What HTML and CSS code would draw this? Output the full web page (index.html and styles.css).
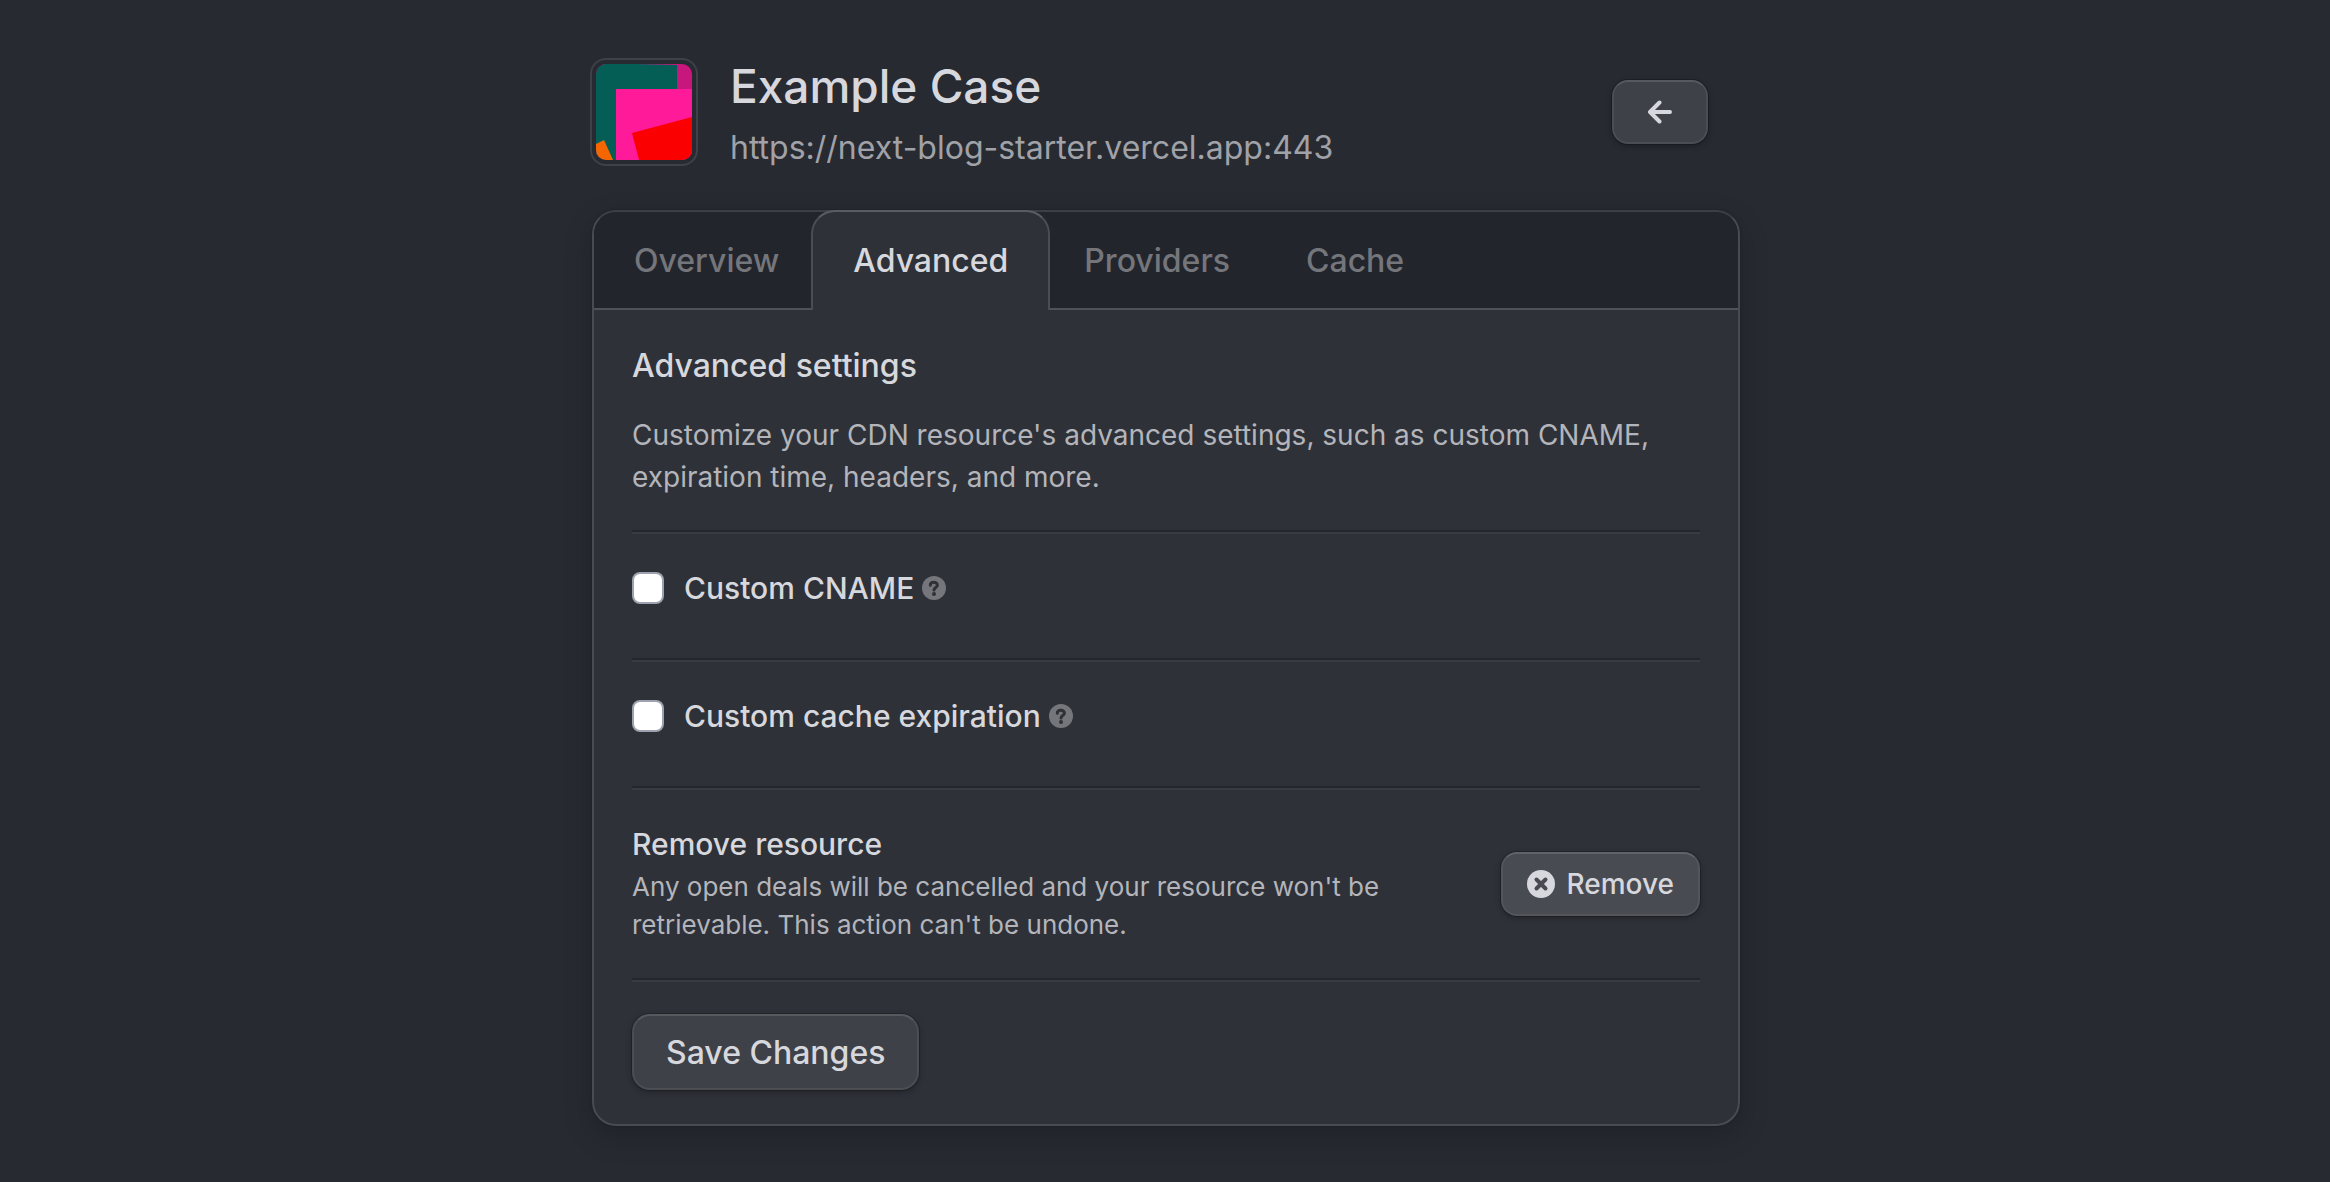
FILE: index.html
```html
<!DOCTYPE html>
<html lang="en">
<head>
<meta charset="utf-8">
<meta name="viewport" content="width=device-width, initial-scale=1">
<title>Example Case</title>
<link rel="stylesheet" href="styles.css">
</head>
<body>
<main class="page">
  <header class="resource">
    <svg class="avatar" viewBox="0 0 96 96" aria-hidden="true">
      <rect width="96" height="96" fill="#c7177c"/>
      <path d="M0 0H40L81 1V25L20 96H0Z" fill="#045e56"/>
      <path d="M20 25H96V96H20Z" fill="#ff1a9a"/>
      <path d="M36 69L96 53V96H43Z" fill="#fb0000"/>
      <path d="M0 80L8 76L17 96H0Z" fill="#f56600"/>
    </svg>
    <div class="resource-text">
      <h1 class="title">Example Case</h1>
      <p class="origin">https://next-blog-starter.vercel.app:443</p>
    </div>
    <button class="button button-back" type="button" aria-label="Back">
      <svg class="icon-arrow" viewBox="0 0 24 24" aria-hidden="true"><path d="M22 12H2M11.500 2.500L2 12L11.500 21.500"/></svg>
    </button>
  </header>

  <section class="card">
    <nav class="tabs">
      <a class="tab" href="#overview">Overview</a>
      <a class="tab tab-active" href="#advanced" aria-current="page">Advanced</a>
      <a class="tab" href="#providers">Providers</a>
      <a class="tab" href="#cache">Cache</a>
    </nav>
    <form class="panel">
      <h2 class="heading">Advanced settings</h2>
      <p class="description">Customize your CDN resource's advanced settings, such as custom CNAME, expiration time, headers, and more.</p>
      <hr class="divider">
      <div class="option">
        <input class="checkbox" type="checkbox" id="cname">
        <label class="label" for="cname">Custom CNAME</label>
        <svg class="icon-help" viewBox="0 0 24 24" aria-hidden="true"><circle cx="12" cy="12" r="12"/><path d="M8.300 9.200C8.300 5.400 15.400 5.200 15.400 9.200C15.400 11.500 12 11.600 12 13.900"/><circle class="dot" cx="12" cy="18" r="2"/></svg>
      </div>
      <hr class="divider">
      <div class="option">
        <input class="checkbox" type="checkbox" id="expiration">
        <label class="label" for="expiration">Custom cache expiration</label>
        <svg class="icon-help" viewBox="0 0 24 24" aria-hidden="true"><circle cx="12" cy="12" r="12"/><path d="M8.300 9.200C8.300 5.400 15.400 5.200 15.400 9.200C15.400 11.500 12 11.600 12 13.900"/><circle class="dot" cx="12" cy="18" r="2"/></svg>
      </div>
      <hr class="divider">
      <div class="removal">
        <div class="removal-text">
          <h3 class="label">Remove resource</h3>
          <p class="note">Any open deals will be cancelled and your resource won't be retrievable. This action can't be undone.</p>
        </div>
        <button class="button button-remove" type="button">
          <svg class="icon-remove" viewBox="0 0 28 28" aria-hidden="true"><circle cx="14" cy="14" r="14"/><path d="M9.500 9.500L18.500 18.500M18.500 9.500L9.500 18.500"/></svg>
          Remove
        </button>
      </div>
      <hr class="divider">
      <button class="button button-save" type="submit">Save Changes</button>
    </form>
  </section>
</main>
</body>
</html>
```
FILE: styles.css
```css
* {
  box-sizing: border-box;
  margin: 0;
}

body {
  min-height: 100vh;
  background: #272a31;
  color: #d7d8dd;
  font-family: Inter, "Liberation Sans", sans-serif;
  font-size: 28px;
}

.page {
  max-width: 1150px;
  margin: 0 auto;
  padding: 58px 0 56px;
}

.resource {
  display: flex;
  align-items: center;
  gap: 32px;
  margin-bottom: 44px;
  padding-right: 32px;
}

.avatar {
  flex: none;
  width: 108px;
  height: 108px;
  padding: 4px;
  border: 2px solid #3e4148;
  border-radius: 16px;
}

.resource-text {
  flex: 1;
}

.title {
  margin-bottom: 16px;
  font-size: 46px;
  font-weight: 500;
  line-height: 56px;
}

.origin {
  color: #a0a2a8;
  font-size: 32px;
  line-height: 36px;
}

.button {
  display: inline-flex;
  align-items: center;
  justify-content: center;
  gap: 12px;
  padding: 0 24px;
  border: 2px solid #4b4d53;
  border-top-color: #57595f;
  border-radius: 16px;
  background: #3f4148;
  box-shadow: 0 0 0 1px rgba(0, 0, 0, .2), 0 2px 6px rgba(0, 0, 0, .3);
  color: inherit;
  font: inherit;
  font-weight: 500;
}

.button-back {
  width: 96px;
  height: 64px;
}

.button-remove {
  flex: none;
  height: 64px;
  border-color: #53555b;
  border-top-color: #606268;
  background: #494b52;
}

.button-save {
  height: 76px;
  padding: 0 32px;
  border-radius: 18px;
  font-size: 32px;
}

.icon-arrow {
  width: 24px;
  height: 24px;
  fill: none;
  stroke: currentColor;
  stroke-width: 4;
  stroke-linecap: round;
  stroke-linejoin: round;
}

.icon-help {
  width: 24px;
  height: 24px;
  margin-left: 8px;
  fill: #74767c;
}

.icon-help path {
  fill: none;
  stroke: #2e3138;
  stroke-width: 3;
  stroke-linecap: round;
}

.icon-help .dot {
  fill: #2e3138;
}

.icon-remove {
  width: 28px;
  height: 28px;
  fill: currentColor;
}

.icon-remove path {
  stroke: #494b52;
  stroke-width: 4;
  stroke-linecap: round;
}

.card {
  margin-left: 2px;
  border: 2px solid #4a4b50;
  border-top-color: #3d3f44;
  border-radius: 24px;
  background: #2e3138;
  box-shadow: 0 0 2px rgba(0, 0, 0, .3), 0 10px 30px rgba(0, 0, 0, .2);
}

.tabs {
  display: flex;
  height: 98px;
  border-bottom: 2px solid #505259;
  border-radius: 22px 22px 0 0;
  background: #23252c;
}

.tab {
  margin-top: -2px;
  padding: 0 38px;
  color: #74767c;
  font-size: 32px;
  font-weight: 500;
  line-height: 102px;
  text-decoration: none;
}

.tab:first-child {
  padding-left: 40px;
}

.tab-active {
  height: 100px;
  margin: -2px -4px 0 -6px;
  padding: 0 40px;
  border: 2px solid #4b4d53;
  border-top-color: #5a5c63;
  border-bottom: 0;
  border-radius: 24px 24px 0 0;
  background: #2e3138;
  color: #d7d8dd;
  line-height: 98px;
}

.panel {
  padding: 32px 38px 34px;
}

.heading {
  margin-bottom: 24px;
  font-size: 32px;
  font-weight: 500;
  line-height: 48px;
}

.description {
  color: #b4b5bb;
  line-height: 42px;
}

.divider {
  height: 4px;
  margin: 32px 0;
  border: 0;
  border-top: 2px solid #24262b;
  border-bottom: 2px solid #393b42;
}

.option {
  display: flex;
  align-items: center;
  height: 44px;
  margin-bottom: 48px;
}

.checkbox {
  appearance: none;
  width: 32px;
  height: 32px;
  margin-right: 20px;
  border: 2px solid #9ca3af;
  border-radius: 8px;
  background: #fff;
}

.label {
  font-size: 30px;
  font-weight: 500;
  line-height: 40px;
}

.removal {
  display: flex;
  align-items: center;
  justify-content: space-between;
  gap: 64px;
  min-height: 124px;
}

.removal-text {
  max-width: 780px;
}

.removal .label {
  margin-bottom: 4px;
}

.note {
  color: #b4b5bb;
  font-size: 26px;
  line-height: 38px;
}
```
